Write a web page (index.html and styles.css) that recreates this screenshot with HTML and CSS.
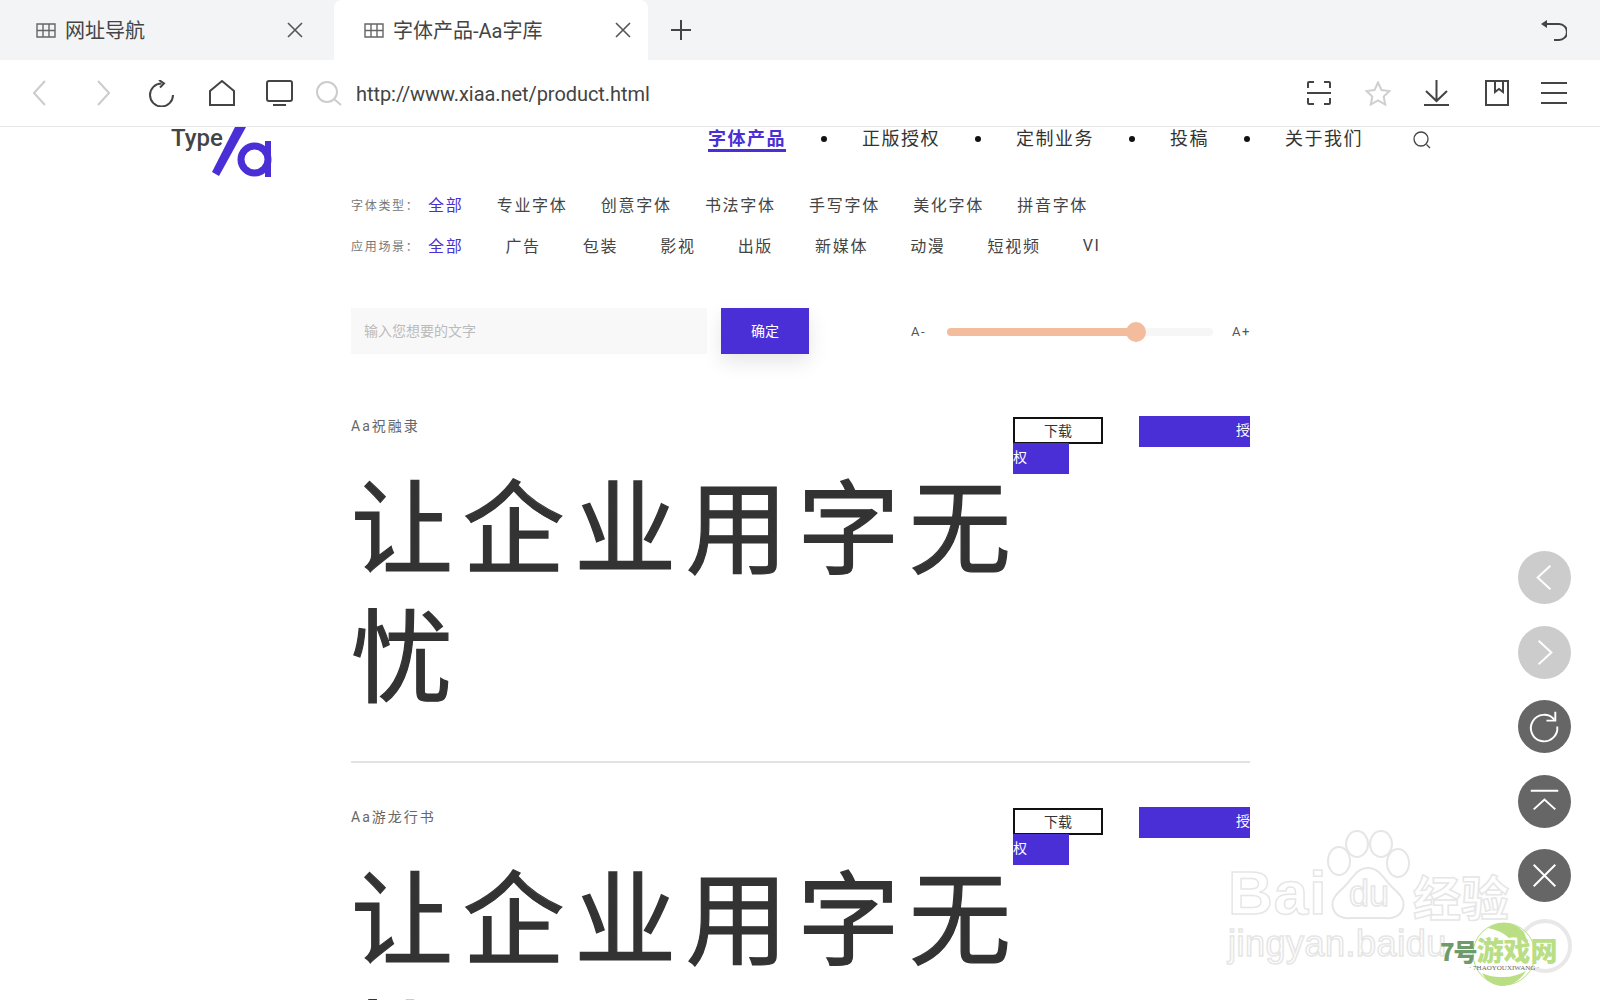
FILE: index.html
```html
<!DOCTYPE html>
<html lang="zh-CN">
<head>
    <meta charset="UTF-8">
    <title>字体产品-Aa字库</title>
    <link rel="stylesheet" href="styles.css">
</head>
<body>
    <div class="tabbar">
        <div class="tab">
            <svg class="tab-icon" viewBox="0 0 20 15"><path d="M1 1h18v13H1zM1 7.500h18M7 1v13M13 1v13"/></svg>
            <span class="tab-title">网址导航</span>
            <svg class="tab-close" viewBox="0 0 16 16"><path d="M1 1l14 14M15 1L1 15"/></svg>
        </div>
        <div class="tab tab-active">
            <svg class="tab-icon" viewBox="0 0 20 15"><path d="M1 1h18v13H1zM1 7.500h18M7 1v13M13 1v13"/></svg>
            <span class="tab-title">字体产品-Aa字库</span>
            <svg class="tab-close" viewBox="0 0 16 16"><path d="M1 1l14 14M15 1L1 15"/></svg>
        </div>
        <svg class="tab-add" viewBox="0 0 20 20"><path d="M10 0v20M0 10h20"/></svg>
        <svg class="tab-undo" viewBox="0 0 26 22"><path d="M4 5h14a7.500 7.500 0 0 1 0 16h-5"/><path class="solid" d="M0 5l6-4v8z"/></svg>
    </div>

    <div class="addrbar">
        <svg class="ic ic-back" viewBox="0 0 13 26"><path d="M12 1L1 13l11 12"/></svg>
        <svg class="ic ic-forward" viewBox="0 0 13 26"><path d="M1 1l11 12L1 25"/></svg>
        <svg class="ic ic-reload" viewBox="0 0 27 27"><path d="M13.500 3.500A11.500 11.500 0 1 0 25 15"/><path d="M11 0l5 3.500-4 4"/></svg>
        <svg class="ic ic-home" viewBox="0 0 26 26"><path d="M13 1L1 11v14h24V11z"/></svg>
        <svg class="ic ic-tablet" viewBox="0 0 27 26"><path d="M3 1h21a2 2 0 0 1 2 2v16a2 2 0 0 1-2 2H3a2 2 0 0 1-2-2V3a2 2 0 0 1 2-2zM7 25h13"/></svg>
        <svg class="ic ic-search" viewBox="0 0 27 25"><circle cx="11" cy="11" r="10"/><path d="M18 18l7 6"/></svg>
        <span class="url">http://www.xiaa.net/product.html</span>
        <svg class="ic ic-scan" viewBox="0 0 24 24"><path d="M1 7V2a1 1 0 0 1 1-1h5M17 1h5a1 1 0 0 1 1 1v5M1 17v5a1 1 0 0 0 1 1h5M17 23h5a1 1 0 0 0 1-1v-5M0 12h24"/></svg>
        <svg class="ic ic-star" viewBox="0 0 26 25"><path d="M13 1.500l3.500 7.500 8 1-5.800 5.500 1.500 8L13 19.500 5.800 23.500l1.500-8L1.500 10l8-1z"/></svg>
        <svg class="ic ic-download" viewBox="0 0 25 26"><path d="M12.500 0v21M2 11l10.500 10L23 11M0 25h25"/></svg>
        <svg class="ic ic-bookmark" viewBox="0 0 24 26"><path d="M1 1h22v24H1zM10 1v11l4-3 4 3V1"/></svg>
        <svg class="ic ic-menu" viewBox="0 0 26 22"><path d="M0 1h26M0 11h26M0 21h26"/></svg>
    </div>

    <div class="page">
        <header class="site-head">
            <div class="logo">
                <span class="logo-type">Type</span>
                <svg class="logo-mark" viewBox="0 0 66 50"><path class="logo-slash" d="M27 0h11L11 49 4 45z"/><circle class="logo-bowl" cx="46.500" cy="32.500" r="13.500"/><path class="logo-stem" d="M63 14v36h-6V14z"/></svg>
            </div>
            <nav class="site-nav">
                <a class="nav-link nav-active">字体产品</a><i class="nav-dot"></i>
                <a class="nav-link">正版授权</a><i class="nav-dot"></i>
                <a class="nav-link">定制业务</a><i class="nav-dot"></i>
                <a class="nav-link">投稿</a><i class="nav-dot"></i>
                <a class="nav-link">关于我们</a>
                <svg class="nav-search" viewBox="0 0 18 18"><circle cx="8" cy="8" r="7"/><path d="M13.500 13.500l3.500 3.500"/></svg>
            </nav>
        </header>

        <main class="content">
            <div class="filter filter-type">
                <span class="filter-label">字体类型：</span>
                <a class="filter-on">全部</a>
                <a>专业字体</a><a>创意字体</a><a>书法字体</a><a>手写字体</a><a>美化字体</a><a>拼音字体</a>
            </div>
            <div class="filter filter-scene">
                <span class="filter-label">应用场景：</span>
                <a class="filter-on">全部</a>
                <a>广告</a><a>包装</a><a>影视</a><a>出版</a><a>新媒体</a><a>动漫</a><a>短视频</a><a>VI</a>
            </div>

            <div class="tools">
                <div class="text-input">输入您想要的文字</div>
                <button class="text-ok">确定</button>
                <div class="sizer">
                    <span class="sizer-label">A-</span>
                    <div class="track"><div class="track-fill" style="width: 72%"></div><div class="thumb"></div></div>
                    <span class="sizer-label">A+</span>
                </div>
            </div>

            <section class="font-item">
                <div class="font-head">
                    <span class="font-name">Aa祝融隶</span>
                    <div class="font-actions"><a class="btn-down">下载</a><a class="btn-buy">授权</a></div>
                </div>
                <div class="font-sample">让企业用字无忧</div>
            </section>
            <section class="font-item">
                <div class="font-head">
                    <span class="font-name">Aa游龙行书</span>
                    <div class="font-actions"><a class="btn-down">下载</a><a class="btn-buy">授权</a></div>
                </div>
                <div class="font-sample">让企业用字无忧</div>
            </section>
        </main>
    </div>

    <div class="side-btns">
        <div class="side-btn side-light"><svg viewBox="0 0 54 54"><path d="M33 15L20 27l13 12"/></svg></div>
        <div class="side-btn side-light"><svg viewBox="0 0 54 54"><path d="M21 15l13 12-13 12"/></svg></div>
        <div class="side-btn"><svg viewBox="0 0 54 54"><path d="M37 20a13.500 13.500 0 1 0 3 7"/><path d="M38 12v9h-9"/></svg></div>
        <div class="side-btn"><svg viewBox="0 0 54 54"><path d="M13 16h28M16 35l11-10 11 10"/></svg></div>
        <div class="side-btn"><svg viewBox="0 0 54 54"><path d="M16 16l22 22M38 16L16 38"/></svg></div>
        <div class="side-ring"></div>
    </div>

    <div class="wm-baidu">
        <span class="wm-bai">Bai</span>
        <svg class="wm-paw" viewBox="0 0 86 90">
            <ellipse cx="14" cy="31" rx="11" ry="14"/><ellipse cx="32" cy="14" rx="11" ry="13"/><ellipse cx="56" cy="14" rx="11" ry="13"/><ellipse cx="73" cy="33" rx="11" ry="14"/>
            <path d="M43 38c-12 0-16 12-25 20-9 8-12 13-10 20 2 8 10 11 18 10h34c8 1 16-2 18-10 2-7-1-12-10-20-9-8-13-20-25-20z"/>
        </svg>
        <span class="wm-du">du</span>
        <span class="wm-jy">经验</span>
        <span class="wm-url">jingyan.baidu</span>
    </div>

    <div class="wm-seven">
        <svg class="wm-seven-logo" viewBox="0 0 64 66">
            <circle cx="32" cy="33" r="31"/>
            <path class="leaf" d="M16 7c12-8 26-6 36 4 2 6 4 10 5 14-8-8-14-10-20-8-6-6-13-8-21-10zM10 52c8 4 14 4 22 4s14-2 22-6c-6 10-16 15-24 15S14 60 10 52z"/>
        </svg>
        <span class="wm-seven-num">7号</span><span class="wm-seven-name">游戏网</span>
        <span class="wm-seven-sub">· 7HAOYOUXIWANG ·</span>
    </div>
</body>
</html>
```

FILE: styles.css
```css
* {
    box-sizing: border-box;
}
html, body {
    margin: 0;
    height: 100%;
    overflow: hidden;
}
body {
    position: relative;
    display: flex;
    flex-direction: column;
    height: 1000px;
    background-color: #ffffff;
    color: #333333;
    font-family: "Roboto", "Noto Sans CJK SC", sans-serif;
}
svg {
    display: block;
    fill: none;
    stroke: #444444;
    stroke-width: 2;
}
a {
    color: inherit;
}

/* tabs */
.tabbar {
    position: relative;
    flex: none;
    display: flex;
    align-items: center;
    height: 60px;
    background-color: #f3f4f6;
}
.tab {
    display: flex;
    align-items: center;
    width: 332px;
    height: 60px;
    padding: 0 29px 0 36px;
    border-radius: 0 0 8px 0;
}
.tab-active {
    width: 314px;
    margin-left: 2px;
    padding: 0 17px 0 30px;
    background-color: #ffffff;
    border-radius: 8px 8px 0 0;
}
.tab-icon {
    flex: none;
    width: 20px;
    height: 15px;
    stroke: #666666;
    stroke-width: 1.400;
}
.tab-title {
    flex: 1;
    margin-left: 9px;
    margin-top: 2px;
    font-size: 20px;
    line-height: 28px;
    color: #444444;
}
.tab-close {
    flex: none;
    width: 16px;
    height: 16px;
    stroke: #555555;
    stroke-width: 1.600;
}
.tab-add {
    width: 20px;
    height: 20px;
    margin-left: 23px;
}
.tab-undo {
    width: 26px;
    height: 22px;
    margin-left: auto;
    margin-right: 33px;
    margin-top: -1px;
}
.tab-undo .solid {
    fill: #444444;
    stroke: none;
}

/* address bar */
.addrbar {
    flex: none;
    display: flex;
    align-items: center;
    height: 67px;
    border-bottom: 1px solid #e6e6e6;
}
.ic {
    flex: none;
    height: 26px;
}
.ic-back {
    width: 13px;
    margin-left: 33px;
    stroke: #cccccc;
}
.ic-forward {
    width: 13px;
    margin-left: 51px;
    stroke: #cccccc;
}
.ic-reload {
    width: 27px;
    height: 27px;
    margin-left: 38px;
}
.ic-home {
    width: 26px;
    margin-left: 33.500px;
}
.ic-tablet {
    width: 27px;
    margin-left: 31.500px;
}
.ic-search {
    width: 27px;
    height: 25px;
    margin-left: 23px;
    stroke: #cccccc;
}
.url {
    flex: 1;
    margin-left: 13px;
    margin-top: 2px;
    font-size: 20px;
    line-height: 28px;
    letter-spacing: -0.060px;
    color: #444444;
    white-space: nowrap;
}
.ic-scan {
    width: 24px;
    height: 24px;
}
.ic-star {
    width: 26px;
    height: 25px;
    margin-left: 34px;
    stroke: #cfcfcf;
}
.ic-download {
    width: 25px;
    margin-left: 33px;
}
.ic-bookmark {
    width: 24px;
    margin-left: 36px;
}
.ic-menu {
    width: 26px;
    height: 22px;
    margin-left: 32px;
    margin-right: 33px;
}

/* page */
.page {
    flex: 1;
    overflow: hidden;
}
.site-head {
    display: flex;
    height: 65px;
    padding-left: 171px;
}
.logo {
    display: flex;
    align-items: flex-start;
    width: 537px;
}
.logo-type {
    margin-top: -1px;
    font-size: 24px;
    line-height: 24px;
    font-weight: 500;
    color: #444444;
}
.logo-mark {
    flex: none;
    width: 66px;
    height: 50px;
    margin-left: -15px;
}
.logo-slash, .logo-stem {
    fill: #4a2fd6;
    stroke: none;
}
.logo-bowl {
    stroke: #4a2fd6;
    stroke-width: 7;
}
.site-nav {
    display: flex;
    align-items: flex-start;
    gap: 35px;
}
.nav-link {
    display: block;
    height: 25px;
    font-size: 18px;
    line-height: 24px;
    letter-spacing: 1.500px;
    white-space: nowrap;
}
.nav-active {
    color: #4a2fd6;
    font-weight: 700;
    border-bottom: 3px solid #4a2fd6;
}
.nav-dot {
    flex: none;
    width: 6px;
    height: 6px;
    margin-top: 9px;
    background-color: #111111;
    border-radius: 50%;
}
.nav-search {
    width: 18px;
    height: 18px;
    margin-top: 4px;
    margin-left: 15px;
    stroke-width: 1.300;
}
.content {
    width: 899px;
    margin-left: 351px;
}
.filter {
    display: flex;
    align-items: center;
    height: 24px;
    margin-bottom: 17px;
    font-size: 16px;
    letter-spacing: 1.700px;
    color: #444444;
    white-space: nowrap;
}
.filter-label {
    width: 77px;
    font-size: 12px;
    color: #777777;
}
.filter-on {
    color: #4a2fd6;
}
.filter-type a {
    margin-right: 33.300px;
}
.filter-scene a {
    margin-right: 42px;
}
.tools {
    display: flex;
    align-items: center;
    margin-top: 51px;
    height: 46px;
}
.text-input {
    flex: none;
    width: 356px;
    height: 46px;
    padding-left: 13px;
    background-color: #f8f8f8;
    font-size: 14px;
    line-height: 46px;
    color: #bbbbbb;
}
.text-ok {
    flex: none;
    width: 88px;
    height: 46px;
    margin-left: 14px;
    padding: 0 0 2px;
    border: 0;
    background-color: #4a2fd6;
    box-shadow: 0 8px 20px rgba(0, 0, 0, 0.1);
    font-family: inherit;
    font-size: 14px;
    color: #ffffff;
}
.sizer {
    display: flex;
    align-items: center;
    margin-left: 102px;
    flex: 1;
}
.sizer-label {
    font-size: 13px;
    letter-spacing: 1.500px;
    color: #555555;
}
.track {
    position: relative;
    display: flex;
    flex: none;
    width: 266px;
    height: 8px;
    margin: 1px 19px 0 21px;
    background-color: #f6f6f6;
    border-radius: 4px;
}
.track-fill {
    height: 8px;
    background-color: #f3bd9d;
    border-radius: 4px;
}
.thumb {
    position: absolute;
    left: 179px;
    top: -6px;
    width: 20px;
    height: 20px;
    background-color: #f3bd9d;
    border-radius: 50%;
}
.font-item {
    padding-top: 45px;
    padding-bottom: 36px;
    border-bottom: 2px solid #e2e2e2;
}
.font-item:first-of-type {
    margin-top: 18px;
}
.font-head {
    display: flex;
    justify-content: space-between;
    height: 50px;
}
.font-name {
    margin-top: -1px;
    font-size: 14px;
    line-height: 20px;
    letter-spacing: 2px;
    color: #666666;
}
.font-actions {
    width: 237px;
    font-size: 14px;
    line-height: 26px;
}
.btn-down {
    display: inline-block;
    width: 90px;
    height: 27px;
    margin-right: 36px;
    border: 2px solid #111111;
    line-height: 25px;
    text-align: center;
    vertical-align: top;
}
.btn-buy {
    padding: 6px 42px 9px 97px;
    background-color: #4a2fd6;
    color: #ffffff;
}
.font-sample {
    width: 690px;
    font-size: 102px;
    line-height: 129px;
    letter-spacing: 9.600px;
    color: #333333;
    -webkit-text-stroke: 1.200px #333333;
}

/* floating buttons */
.side-btns {
    position: absolute;
    left: 1518px;
    top: 551px;
    display: flex;
    flex-direction: column;
    gap: 21.500px;
}
.side-btn {
    width: 53px;
    height: 53px;
    background-color: #666666;
    border-radius: 50%;
}
.side-light {
    background-color: #cccccc;
}
.side-btn svg {
    width: 53px;
    height: 53px;
    stroke: #ffffff;
}
.side-ring {
    width: 54px;
    height: 54px;
    margin-top: -5px;
    border: 4px solid #e8e8e8;
    border-radius: 50%;
}

/* watermarks */
.wm-baidu {
    position: absolute;
    left: 1228px;
    top: 830px;
    width: 290px;
    height: 140px;
    color: #ffffff;
    font-family: "Liberation Sans", sans-serif;
    -webkit-text-stroke: 1.500px #e6e6e6;
}
.wm-bai {
    position: absolute;
    left: 0;
    top: 28px;
    font-size: 62px;
    line-height: 70px;
    font-weight: 700;
    letter-spacing: 1px;
}
.wm-paw {
    position: absolute;
    left: 97px;
    top: 0;
    width: 86px;
    height: 90px;
    stroke: #e6e6e6;
    fill: #ffffff;
}
.wm-du {
    position: absolute;
    left: 121px;
    top: 44px;
    font-size: 36px;
    line-height: 40px;
}
.wm-jy {
    position: absolute;
    left: 185px;
    top: 38px;
    font-family: "Noto Sans CJK SC", sans-serif;
    font-size: 48px;
    line-height: 54px;
    font-weight: 700;
}
.wm-url {
    position: absolute;
    left: 0;
    top: 92px;
    font-size: 36px;
    line-height: 44px;
    letter-spacing: 0.500px;
    font-weight: 400;
}
.wm-seven {
    position: absolute;
    left: 1440px;
    top: 921px;
    width: 122px;
    height: 66px;
    font-family: "Noto Sans CJK SC", sans-serif;
    font-weight: 900;
    white-space: nowrap;
}
.wm-seven-logo {
    position: absolute;
    left: 32px;
    top: 0;
    width: 64px;
    height: 66px;
    stroke: #b9de84;
    stroke-width: 1;
    fill: #ffffff;
}
.wm-seven-logo .leaf {
    fill: #b9de84;
    stroke: none;
}
.wm-seven-num, .wm-seven-name {
    position: relative;
    font-size: 27px;
    line-height: 30px;
    top: 14px;
}
.wm-seven-num {
    font-size: 24px;
    letter-spacing: -1px;
    color: #6f9a6a;
}
.wm-seven-name {
    color: #b9de84;
}
.wm-seven-sub {
    position: absolute;
    left: 29px;
    top: 43px;
    font-family: "Liberation Serif", serif;
    font-size: 7px;
    line-height: 9px;
    font-weight: 400;
    color: #666666;
}
```
